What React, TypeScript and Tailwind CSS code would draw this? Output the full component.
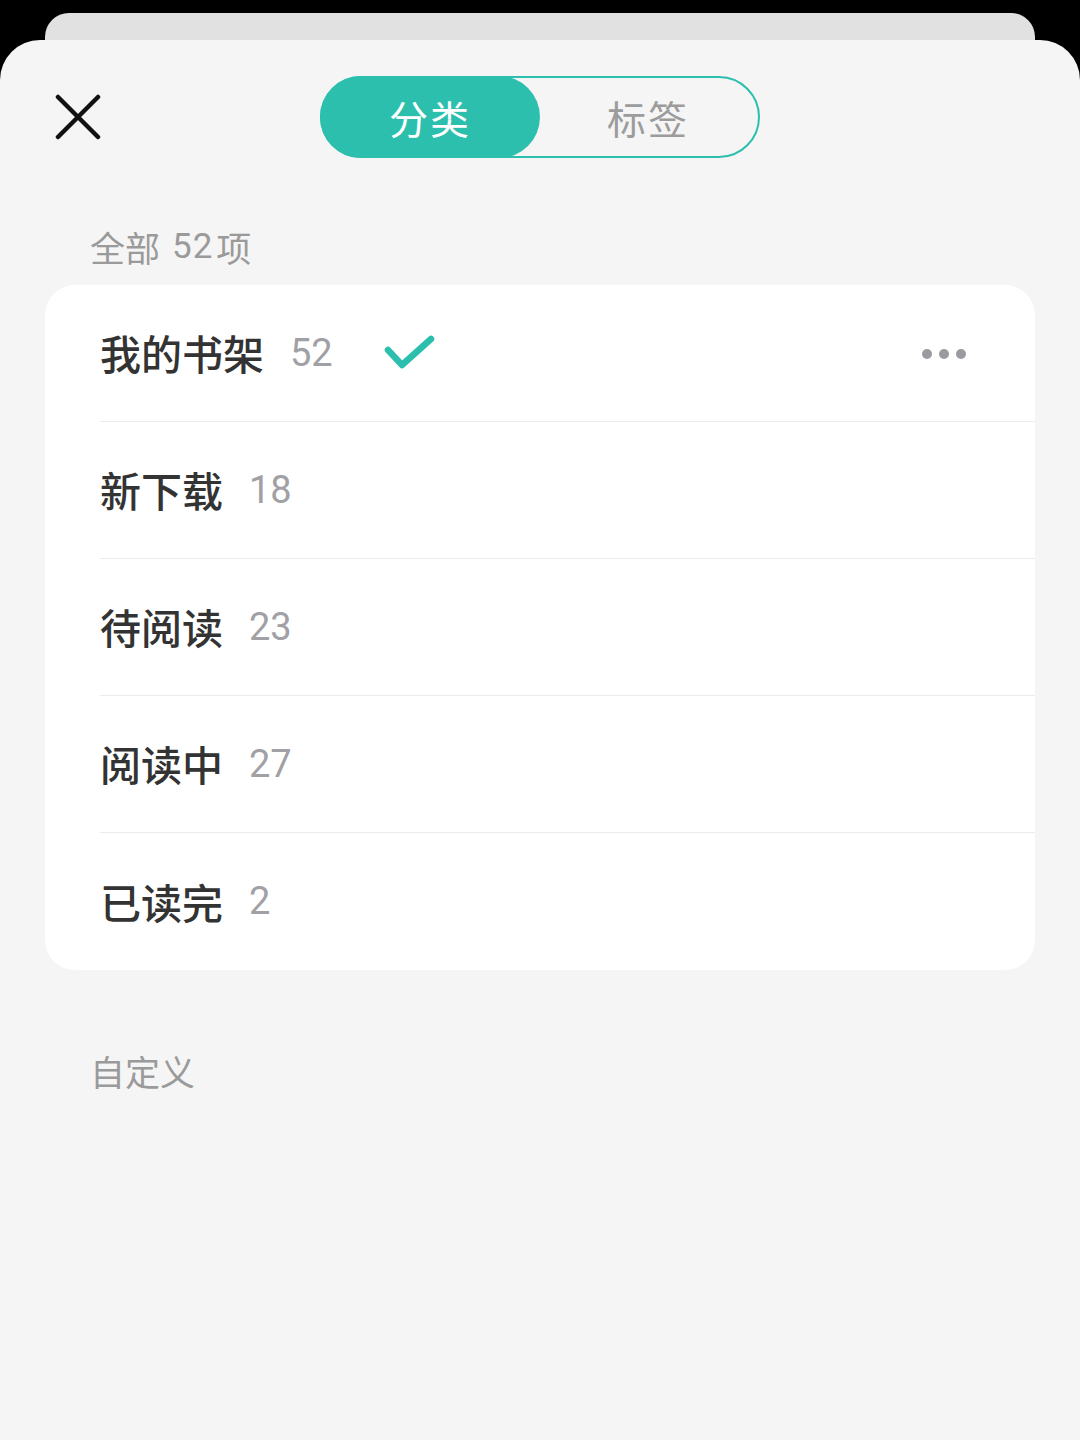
import React from "react";

const rows = [
  { name: "我的书架", count: 52, active: true },
  { name: "新下载", count: 18 },
  { name: "待阅读", count: 23 },
  { name: "阅读中", count: 27 },
  { name: "已读完", count: 2 },
];

const font = { fontFamily: '"Noto Sans CJK SC", "Noto Sans", sans-serif' };
const digits = { fontFamily: "Roboto, sans-serif" };

export default function App() {
  return (
    <div className="w-[1080px] h-[1440px] bg-black overflow-hidden" style={font}>
      {/* Стопка листов сверху */}
      <div className="mx-[45px] mt-[13px] h-[40px] rounded-t-[24px] bg-[#e1e1e1]" />
      <div className="-mt-[13px] h-[1400px] rounded-t-[40px] bg-[#f5f5f5] relative">
        {/* Шапка */}
        <div className="flex items-center h-[118px] pt-[36px] px-[55px] relative">
          <svg width="46" height="46" viewBox="0 0 46 46" className="shrink-0">
            <path d="M3 3 L43 43 M43 3 L3 43" stroke="#111" strokeWidth="4.5" strokeLinecap="round" />
          </svg>
          <div className="absolute left-[320px] top-[36px] w-[440px] h-[82px] rounded-full border-2 border-[#2dbfae] flex">
            <div className="w-[220px] -m-[2px] h-[82px] rounded-full bg-[#2dbfae] flex items-center justify-center text-white text-[39px] tracking-[2px]">
              分类
            </div>
            <div className="flex-1 flex items-center justify-center text-[#9c9c9c] text-[39px] tracking-[2px]">
              标签
            </div>
          </div>
        </div>

        <div className="px-[90px] pt-[66px] pb-[15px] text-[35px] leading-[46px] text-[#9a9a9a] flex">
          <span>全部</span>
          <span className="ml-[12px] mr-[3px] tracking-[1px]" style={digits}>52</span>
          <span>项</span>
        </div>

        {/* Список категорий */}
        <div className="mx-[45px] bg-white rounded-[30px] overflow-hidden">
          {rows.map((r, i) => (
            <div key={r.name} className="pl-[55px]">
              <div
                className={`h-[137px] flex items-center pr-[69px] ${
                  i < rows.length - 1 ? "border-b-[1.5px] border-[#ebebeb]" : ""
                }`}
              >
                <span className="text-[41px] font-medium text-[#333333]">{r.name}</span>
                <span className="ml-[26px] text-[38px] text-[#a0a0a5]" style={digits}>
                  {r.count}
                </span>
                {r.active && (
                  <>
                    <svg width="52" height="36" viewBox="0 0 52 36" className="ml-[51px]">
                      <path d="M4 15 L18 30 L47 4" fill="none" stroke="#2dbfae" strokeWidth="6.5" strokeLinecap="round" strokeLinejoin="round" />
                    </svg>
                    <div className="ml-auto flex gap-[7px] mt-[2px]">
                      <span className="w-[10px] h-[10px] rounded-full bg-[#9a9aa0]" />
                      <span className="w-[10px] h-[10px] rounded-full bg-[#9a9aa0]" />
                      <span className="w-[10px] h-[10px] rounded-full bg-[#9a9aa0]" />
                    </div>
                  </>
                )}
              </div>
            </div>
          ))}
        </div>

        <div className="px-[90px] pt-[78px] text-[35px] leading-[46px] text-[#9a9a9a]">自定义</div>
      </div>
    </div>
  );
}
